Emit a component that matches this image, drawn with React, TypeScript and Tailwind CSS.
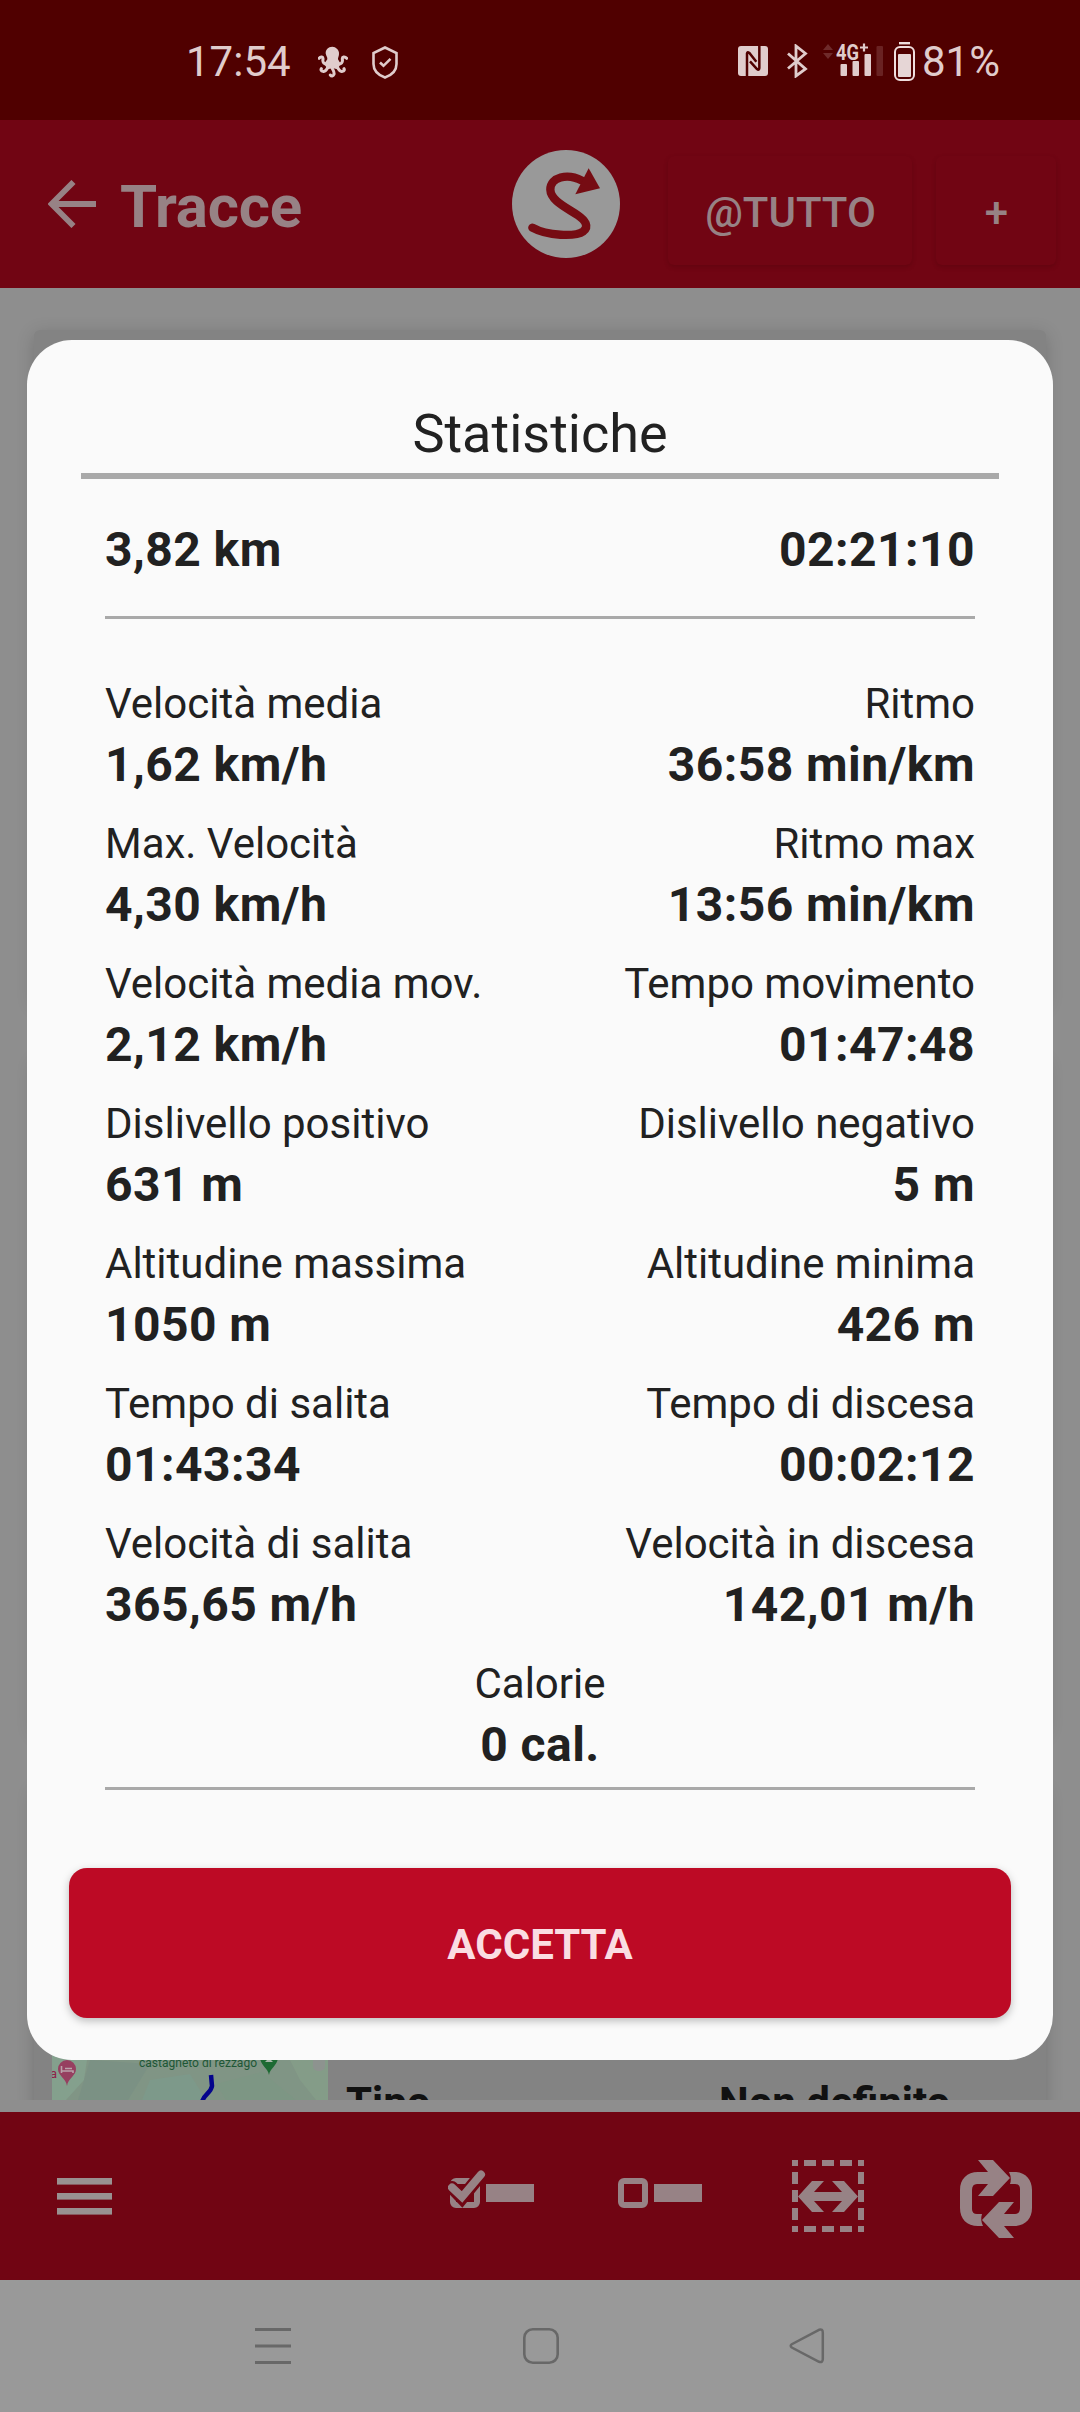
import React from "react";

const stats = [
  { left: ["Velocità media", "1,62 km/h"], right: ["Ritmo", "36:58 min/km"] },
  { left: ["Max. Velocità", "4,30 km/h"], right: ["Ritmo max", "13:56 min/km"] },
  {
    left: ["Velocità media mov.", "2,12 km/h"],
    right: ["Tempo movimento", "01:47:48"],
  },
  {
    left: ["Dislivello positivo", "631 m"],
    right: ["Dislivello negativo", "5 m"],
  },
  {
    left: ["Altitudine massima", "1050 m"],
    right: ["Altitudine minima", "426 m"],
  },
  {
    left: ["Tempo di salita", "01:43:34"],
    right: ["Tempo di discesa", "00:02:12"],
  },
  {
    left: ["Velocità di salita", "365,65 m/h"],
    right: ["Velocità in discesa", "142,01 m/h"],
  },
];

const OctopusIcon = () => (
  <svg viewBox="54 50 90 96" className="w-[30px] h-[32px]" fill="none">
    <path
      d="M97 52C84 52 77 61 77 72C78 80 83 84 82 90L72 104L84 120L97 116L112 120L122 104L114 90C113 85 118 80 117 70C116 60 108 53 97 52Z"
      fill="#e0cccc"
    />
    <path
      d="M84 104C72 106 67 98 69 90C70 82 62 80 57 87M112 104C124 106 129 98 127 90C126 82 134 80 140 87M84 112C80 122 76 128 69 126C63 125 62 121 64 118M112 112C116 122 120 128 127 126C133 125 134 121 132 118M95 114C99 122 104 128 102 135C100 141 94 141 91 137"
      stroke="#e0cccc"
      strokeWidth="9"
      strokeLinecap="round"
    />
  </svg>
);

const ShieldIcon = () => (
  <svg viewBox="0 0 26 33" className="w-[26px] h-[33px]" fill="none" stroke="#e0cccc">
    <path d="M13 1.5L24.5 7V18C24.5 24 20 29 13 31.5C6 29 1.5 24 1.5 18V7Z" strokeWidth="2.6" />
    <path d="M8 16.5L11.5 19.8L18.5 12.8" strokeWidth="2.6" />
  </svg>
);

const NfcIcon = () => (
  <svg viewBox="24 48 90 90" className="w-[30px] h-[30px]" fill="none">
    <rect x="24" y="48" width="90" height="90" rx="9" fill="#e0cccc" />
    <path
      d="M51 138V70Q52 64 58 69L79 95M88 48V114Q87 122 81 117L60 94"
      stroke="#500000"
      strokeWidth="7.5"
    />
  </svg>
);

const BluetoothIcon = () => (
  <svg viewBox="0 0 21 34" className="w-[21px] h-[34px]" fill="none">
    <path
      d="M1 9.5L18.5 25L9 32V2L18.5 9.5L1 24.5"
      stroke="#e0cccc"
      strokeWidth="2.8"
    />
  </svg>
);

const SignalIcon = () => (
  <svg viewBox="0 0 62 36" className="w-[62px] h-[36px] overflow-visible">
    <path d="M0 7L5 1L10 7ZM0 10H10L5 16Z" fill="#6f2a2a" />
    <text
      x="13"
      y="16.5"
      textLength="23"
      lengthAdjust="spacingAndGlyphs"
      fontSize="22"
      fontWeight="700"
      fill="#e0cccc"
    >
      4G
    </text>
    <path d="M37 4.5H45M41 0.5V8.5" stroke="#e0cccc" strokeWidth="2.2" />
    <rect x="17.5" y="21" width="6.5" height="12" rx="1" fill="#e0cccc" />
    <rect x="29.5" y="18" width="6.5" height="15" rx="1" fill="#e0cccc" />
    <rect x="41.5" y="11" width="6.5" height="22" rx="1" fill="#e0cccc" />
    <rect x="53.5" y="3" width="6.5" height="30" rx="1" fill="#6a2222" />
  </svg>
);

const BatteryIcon = () => (
  <svg viewBox="0 0 21 39" className="w-[21px] h-[39px]" fill="none">
    <rect x="5" y="0" width="11" height="2.4" fill="#f0dede" />
    <rect x="1" y="5" width="19" height="33" rx="5" stroke="#f0dede" strokeWidth="2" />
    <rect x="4" y="12" width="13" height="23" rx="1" fill="#e6d6d6" />
  </svg>
);

const LogoIcon = () => (
  <svg viewBox="36 29 324 324" className="w-[108px] h-[108px] ml-[211px]">
    <circle cx="198" cy="191" r="162" fill="#999999" />
    <path
      d="M97 262C142 287 226 290 250 273C268 259 256 240 234 225C196 200 152 180 151 148C151 110 202 98 246 121"
      fill="none"
      stroke="#760c13"
      strokeWidth="25"
      strokeLinecap="round"
    />
    <path d="M266 84L300 144L226 162Z" fill="#760c13" />
  </svg>
);

const CheckedIcon = () => (
  <svg viewBox="0 0 87 40" className="w-[87px] h-[40px]" fill="none">
    <rect x="5" y="11" width="24" height="24" rx="3" stroke="#978285" strokeWidth="6" />
    <path
      d="M4 17.5L14 28L33 4.5"
      stroke="#710513"
      strokeWidth="13"
      strokeLinecap="round"
    />
    <path
      d="M4 17.5L14 27L33 4.5"
      stroke="#978285"
      strokeWidth="8"
      strokeLinecap="round"
    />
    <rect x="38" y="14" width="48" height="18" fill="#978285" />
  </svg>
);

const UncheckedIcon = () => (
  <svg viewBox="0 0 85 30" className="w-[85px] h-[30px]" fill="none">
    <rect x="3" y="3" width="24" height="24" rx="3" stroke="#978285" strokeWidth="6" />
    <rect x="36" y="6" width="48" height="18" fill="#978285" />
  </svg>
);

const SelectIcon = () => (
  <svg viewBox="0 0 72 72" className="w-[72px] h-[72px]" fill="none">
    <path
      d="M0 3H72M0 69H72M3 0V72M69 0V72"
      stroke="#978285"
      strokeWidth="6"
      strokeDasharray="6 6 12 6 12 6 12 6 6 100"
    />
    <path
      d="M6 36.5L20 21H32L22 32H50L40 21H52L66 36.5L52 52H40L50 41H22L32 52H20Z"
      fill="#978285"
    />
  </svg>
);

const LoopIcon = () => {
  const half =
    "M18 0H33L50 18L33 36H18L28 24H17Q12 24 12 30V49Q12 54 17 54H22Q20 60 23 66H18C7 66 0 59 0 48V30C0 19 7 12 18 12H28Z";
  return (
    <svg viewBox="0 0 72 78" className="w-[72px] h-[78px]" fill="#978285">
      <path d={half} />
      <path d={half} transform="rotate(180 36 39)" />
    </svg>
  );
};

const MapThumb = () => (
  <svg viewBox="52 2040 276 60" className="w-[276px] h-[60px]">
    <rect x="52" y="2040" width="276" height="60" fill="#809585" />
    <path d="M52 2040H90L84 2080L66 2100H52Z" fill="#84a08d" />
    <path d="M90 2060L150 2064L128 2100H78Z" fill="#7b9184" />
    <path d="M150 2080L190 2074L206 2100H142Z" fill="#7d998a" />
    <path d="M216 2084L262 2072L296 2100H226Z" fill="#7d9684" />
    <path d="M290 2060H328V2100H316L300 2080Z" fill="#849c88" />
    <text x="50" y="2078" fontSize="13" fill="#8e2149">
      a
    </text>
    <path
      d="M67 2086C66 2078 58 2076 58 2069A9 9 0 0 1 76 2069C76 2076 68 2078 67 2086Z"
      fill="#963f60"
    />
    <path
      d="M61.5 2066V2073M61.5 2071H73V2073M65 2068.5H72"
      stroke="#b9a2aa"
      strokeWidth="1.6"
      fill="none"
    />
    <text
      x="139"
      y="2067"
      textLength="118"
      lengthAdjust="spacingAndGlyphs"
      fontSize="13"
      fill="#1e5736"
    >
      castagneto di rezzago
    </text>
    <path d="M260 2058H278C277 2066 270 2068 269 2075C268 2068 261 2066 260 2058Z" fill="#1d6a33" />
    <path d="M265 2062L269 2058L273 2062Z" fill="#a7b7aa" />
    <rect x="313" y="2056" width="12" height="15" rx="5" fill="#8d938f" />
    <path
      d="M211 2075L212 2086C211 2093 204 2094 202 2102"
      fill="none"
      stroke="#04048c"
      strokeWidth="4.5"
    />
  </svg>
);

const StatusBar = () => (
  <div className="h-[120px] shrink-0 bg-[#500000] flex items-center justify-between pl-[186px] pr-[80px] text-[42px] leading-[50px] text-[#e0cccc]">
    <div className="flex items-center pt-[4px]">
      <span className="w-[132px]">17:54</span>
      <OctopusIcon />
      <span className="w-6" />
      <ShieldIcon />
    </div>
    <div className="flex items-center pt-[2px]">
      <NfcIcon />
      <span className="w-[19px]" />
      <BluetoothIcon />
      <span className="w-[15px]" />
      <SignalIcon />
      <span className="w-[9px]" />
      <BatteryIcon />
      <span className="ml-[7px] pt-[2px] w-[78px]">81%</span>
    </div>
  </div>
);

const Header = () => (
  <div className="h-[168px] shrink-0 bg-[#710513] flex items-start text-[#978285]">
    <svg viewBox="0 0 48 48" className="w-[48px] h-[48px] ml-[48px] mt-[60px]" fill="none">
      <path d="M48 24H4M25.5 2L3.5 24L25.5 46" stroke="#978285" strokeWidth="5.8" />
    </svg>
    <h1 className="ml-[24px] mt-[52px] w-[181px] text-[60px] leading-[70px] font-bold tracking-[-0.2px] whitespace-nowrap">
      Tracce
    </h1>
    <div className="mt-[30px]">
      <LogoIcon />
    </div>
    <button className="ml-[48px] mt-[36px] w-[244px] h-[109px] pt-[3px] pl-[1px] rounded-md text-[42px] font-medium shadow-[0_2px_4px_rgba(60,0,8,0.25)]">
      @TUTTO
    </button>
    <button className="ml-[24px] mt-[36px] w-[120px] h-[109px] pt-[3px] pl-[1px] rounded-md text-[42px] font-medium shadow-[0_2px_4px_rgba(60,0,8,0.25)]">
      +
    </button>
  </div>
);

const TrackList = () => (
  <div className="h-[1824px] shrink-0 bg-[#8e8e8e] pb-[12px]">
    <div className="h-[1812px] overflow-hidden px-[34px] pt-[42px]">
      <div className="h-[672px] bg-[#838383] rounded-[6px] shadow-[0_4px_18px_rgba(0,0,0,0.18)]" />
      <div className="mt-[56px] h-[672px] bg-[#838383] rounded-[6px] shadow-[0_4px_18px_rgba(0,0,0,0.18)]" />
      <div className="mt-[56px] h-[672px] bg-[#838383] rounded-[6px] shadow-[0_4px_18px_rgba(0,0,0,0.18)] flex items-start pl-[18px] pt-[254px] text-[#111111]">
        <MapThumb />
        <div className="flex pt-[39px] text-[42px] leading-[47px] font-bold whitespace-nowrap">
          <span className="ml-[18px] w-[373px]">Tipo</span>
          <span>Non definito</span>
        </div>
      </div>
    </div>
  </div>
);

const BottomBar = () => (
  <div className="h-[168px] shrink-0 bg-[#710513] flex items-start">
    <svg viewBox="0 0 55 38" className="w-[55px] h-[38px] ml-[57px] mt-[66px]" fill="#999191">
      <rect width="55" height="6.6" />
      <rect y="15" width="55" height="6.6" />
      <rect y="30" width="55" height="6.6" />
    </svg>
    <div className="ml-[336px] mt-[58px]">
      <CheckedIcon />
    </div>
    <div className="ml-[83px] mt-[66px]">
      <UncheckedIcon />
    </div>
    <div className="ml-[89px] mt-[48px]">
      <SelectIcon />
    </div>
    <div className="ml-[96px] mt-[48px]">
      <LoopIcon />
    </div>
  </div>
);

const NavBar = () => (
  <div className="h-[132px] shrink-0 bg-[#999999] flex items-start pt-[48px] pl-[255px]">
    <svg viewBox="0 0 36 36" className="w-[36px] h-[36px]" fill="#686868">
      <rect width="36" height="3" />
      <rect y="16.5" width="36" height="3" />
      <rect y="33" width="36" height="3" />
    </svg>
    <svg viewBox="0 0 36 36" className="w-[36px] h-[36px] ml-[232px]" fill="none">
      <rect x="1.3" y="1.3" width="33.4" height="33.4" rx="8.5" stroke="#686868" strokeWidth="2.6" />
    </svg>
    <svg viewBox="0 0 36 36" className="w-[36px] h-[36px] ml-[230px]" fill="none">
      <path
        d="M30 1.8L2.8 16.2Q0.6 17.8 2.8 19.5L30 33.8Q33.8 35 33.8 31V4.4Q33.8 0.6 30 1.8Z"
        stroke="#686868"
        strokeWidth="2.5"
      />
    </svg>
  </div>
);

const Stat = ({ label, value }: { label: string; value: string }) => (
  <div>
    <p className="text-[42px] leading-[58px]">{label}</p>
    <p className="text-[48px] leading-[64px] font-bold tracking-[0.45px]">{value}</p>
  </div>
);

const StatsDialog = () => (
  <div className="absolute left-[27px] top-[340px] w-[1026px] h-[1720px] rounded-[45px] bg-[#fafafa] text-[#212121] pt-[62px] px-[42px]">
    <div className="px-3">
      <h2 className="text-center text-[54px] leading-[64px]">Statistiche</h2>
      <div className="mt-[7px] h-1.5 bg-[#a9a9a9]" />
    </div>

    <div className="px-9">
      <div className="mt-[39px] flex justify-between text-[48px] leading-[64px] font-bold tracking-[0.45px]">
        <span>3,82 km</span>
        <span>02:21:10</span>
      </div>
      <div className="mt-[34px] h-[3px] bg-[#a9a9a9]" />

      <div className="mt-14 space-y-[18px]">
        {stats.map(({ left, right }) => (
          <div key={left[0]} className="flex justify-between">
            <Stat label={left[0]} value={left[1]} />
            <div className="text-right">
              <Stat label={right[0]} value={right[1]} />
            </div>
          </div>
        ))}
        <div className="text-center">
          <Stat label="Calorie" value="0 cal." />
        </div>
      </div>
      <div className="mt-[10px] h-[3px] bg-[#a9a9a9]" />
    </div>

    <button className="mt-[78px] w-full h-[150px] pt-[3px] rounded-[18px] bg-[#bd0a25] text-[42px] font-bold text-[#fadde2] shadow-[0_3px_9px_rgba(0,0,0,0.25)]">
      ACCETTA
    </button>
  </div>
);

const App = () => (
  <div className="relative w-[1080px] h-[2412px] overflow-hidden flex flex-col font-[Roboto,sans-serif]">
    <StatusBar />
    <Header />
    <TrackList />
    <BottomBar />
    <NavBar />
    <StatsDialog />
  </div>
);

export default App;
